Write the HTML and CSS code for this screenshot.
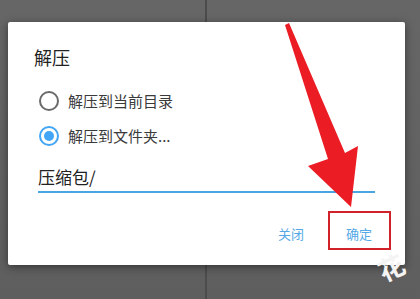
FILE: index.html
```html
<!DOCTYPE html>
<html lang="zh-CN">
<head>
    <meta charset="UTF-8">
    <meta name="viewport" content="width=device-width, initial-scale=1.0">
    <title>解压</title>
    <link rel="stylesheet" href="styles.css">
</head>
<body>
    <div class="screen">
        <div class="dialog">
            <h2 class="dialog-title">解压</h2>
            <div class="radio-group">
                <label class="radio-row">
                    <span class="radio"></span>
                    <span class="radio-label">解压到当前目录</span>
                </label>
                <label class="radio-row">
                    <span class="radio checked"></span>
                    <span class="radio-label">解压到文件夹...</span>
                </label>
            </div>
            <div class="path-input">压缩包/</div>
            <div class="actions">
                <button class="text-btn">关闭</button>
                <button class="text-btn">确定</button>
            </div>
        </div>

        <!-- annotation over the screenshot -->
        <svg class="arrow" width="420" height="299" viewBox="0 0 420 299">
            <polygon points="285,25 289,23 345,153 358,146 351,207 308,166 328,159" fill="#ec1c24"/>
        </svg>
        <div class="mark-box"></div>
        <div class="watermark">花</div>
    </div>
</body>
</html>
```

FILE: styles.css
```css
body {
    margin: 0;
    font-family: "Noto Sans CJK SC", "Noto Sans", sans-serif;
}

.screen {
    position: relative;
    width: 420px;
    height: 299px;
    overflow: hidden;
    background: linear-gradient(#666666, #5e5e5e);
    padding-top: 22px;
    box-sizing: border-box;
}

.screen::before {
    content: "";
    position: absolute;
    left: 205px;
    top: 0;
    width: 2px;
    height: 100%;
    background-color: #4c4c4c;
}

.dialog {
    position: relative;
    margin-left: 8px;
    width: 397px;
    height: 243px;
    box-sizing: border-box;
    padding: 22px 25px 0 26px;
    background-color: #fff;
    border-radius: 2px;
    box-shadow: 0 2px 8px rgba(0, 0, 0, 0.45);
}

.dialog-title {
    margin: 0;
    font-size: 18px;
    line-height: 26px;
    font-weight: normal;
    color: #222;
}

.radio-group {
    margin-top: 13px;
    padding-left: 5px;
}

.radio-row {
    display: flex;
    align-items: center;
    height: 35px;
    gap: 9px;
}

.radio {
    width: 20px;
    height: 20px;
    box-sizing: border-box;
    border: 2px solid #6a6a6a;
    border-radius: 50%;
    display: flex;
    align-items: center;
    justify-content: center;
}

.radio.checked {
    border-color: #42a5f5;
}

.radio.checked::after {
    content: "";
    width: 10px;
    height: 10px;
    border-radius: 50%;
    background-color: #42a5f5;
}

.radio-label {
    font-size: 15px;
    color: #3a3a3a;
}

.path-input {
    margin: 12px 5px 0 4px;
    font-size: 17px;
    line-height: 24px;
    color: #222;
    padding-bottom: 2px;
    border-bottom: 2px solid #4aa6e2;
}

.actions {
    display: flex;
    justify-content: flex-end;
    gap: 26px;
    margin-top: 22px;
    height: 36px;
    align-items: center;
}

.text-btn {
    background: none;
    border: none;
    padding: 0 8px;
    font-family: inherit;
    font-size: 13px;
    color: #55a8e6;
    cursor: pointer;
}

.arrow {
    position: absolute;
    left: 0;
    top: 0;
    pointer-events: none;
}

.mark-box {
    position: absolute;
    left: 328px;
    top: 211px;
    width: 63px;
    height: 39px;
    box-sizing: border-box;
    border: 2px solid #d1222c;
}

.watermark {
    position: absolute;
    left: 378px;
    top: 252px;
    font-size: 26px;
    line-height: 30px;
    font-weight: bold;
    color: #f4f4f4;
    transform: rotate(-25deg);
}
```
